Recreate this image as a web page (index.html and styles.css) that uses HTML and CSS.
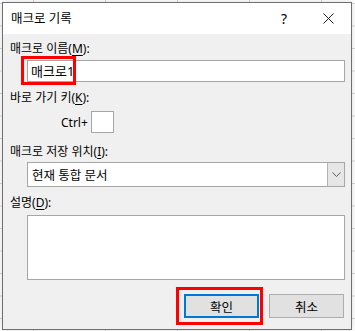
FILE: index.html
```html
<!DOCTYPE html>
<html lang="ko">
<head>
    <meta charset="UTF-8">
    <meta name="viewport" content="width=device-width, initial-scale=1.0">
    <title>매크로 기록</title>
    <link rel="stylesheet" href="styles.css">
</head>
<body>
    <div class="dialog">
        <div class="titlebar">
            <span class="title">매크로 기록</span>
            <span class="help">?</span>
            <svg class="close" width="11" height="11" viewBox="0 0 11 11">
                <path d="M0.5 0.5 L10.5 10.5 M10.5 0.5 L0.5 10.5" stroke="#1a1a1a" stroke-width="1" fill="none"/>
            </svg>
        </div>
        <div class="content">
            <div class="label first">매크로 이름(<u>M</u>):</div>
            <div class="field">
                <div class="textbox">매크로1</div>
                <div class="mark mark-name"></div>
            </div>

            <div class="label">바로 가기 키(<u>K</u>):</div>
            <div class="shortcut">
                <span>Ctrl+</span>
                <div class="keybox"></div>
            </div>

            <div class="label gap-lg">매크로 저장 위치(<u>I</u>):</div>
            <div class="select">
                <span class="select-text">현재 통합 문서</span>
                <div class="drop">
                    <svg width="9" height="5" viewBox="0 0 9 5">
                        <path d="M0.5 0.5 L4.5 4.5 L8.5 0.5" stroke="#5a5a5a" stroke-width="1" fill="none"/>
                    </svg>
                </div>
            </div>

            <div class="label">설명(<u>D</u>):</div>
            <div class="memo"></div>

            <div class="buttons">
                <div class="btn-wrap">
                    <div class="btn default">확인</div>
                    <div class="mark mark-ok"></div>
                </div>
                <div class="btn">취소</div>
            </div>
        </div>
    </div>
</body>
</html>
```

FILE: styles.css
```css
body{
    margin: 0;
    width: 355px;
    height: 331px;
    overflow: hidden;
    background-color: white;
    background-image:
        linear-gradient(to right, #d6d6d6 1px, transparent 1px),
        linear-gradient(to bottom, #d6d6d6 1px, transparent 1px);
    background-size: 72px 22.5px;
    background-position: 33px 3px;
    font-family: "Noto Sans", "Noto Sans CJK KR", sans-serif;
    font-size: 12px;
    color: #000;
}
.dialog{
    box-sizing: border-box;
    width: 350px;
    height: 328px;
    margin: 2px 0 0 2px;
    border: 1px solid #6f6f6f;
    background-color: #f0f0f0;
    box-shadow: 0 0 6px rgba(0,0,0,0.15);
    display: flex;
    flex-direction: column;
}
.titlebar{
    height: 31px;
    background-color: white;
    display: flex;
    align-items: center;
    padding: 0 0 0 8px;
}
.title{
    font-size: 12.5px;
    line-height: 16px;
    flex: 1;
}
.help{
    font-size: 14px;
    line-height: 16px;
    margin-right: 36px;
}
.close{
    margin-right: 17px;
}
.content{
    padding: 0 7px;
    display: flex;
    flex-direction: column;
    align-items: flex-start;
}
.label{
    line-height: 16px;
    margin-top: 8px;
}
.label u{
    text-underline-offset: 2px;
}
.first{
    margin-top: 7px;
}
.gap-lg{
    margin-top: 11px;
}
.field{
    position: relative;
    margin: 3px 0 0 17px;
}
.textbox{
    box-sizing: border-box;
    width: 318px;
    height: 22px;
    background-color: white;
    border: 1px solid #a6a6a6;
    padding: 0 0 0 3px;
    font-size: 13px;
    line-height: 20px;
}
.mark{
    position: absolute;
    box-sizing: border-box;
    border: 3px solid #ff0000;
}
.mark-name{
    left: -6px;
    top: -4px;
    width: 55px;
    height: 29px;
}
.shortcut{
    display: flex;
    align-items: center;
    margin: 5px 0 0 51px;
}
.shortcut span{
    margin-right: 3px;
}
.keybox{
    box-sizing: border-box;
    width: 23px;
    height: 22px;
    background-color: white;
    border: 1px solid #a6a6a6;
}
.select{
    box-sizing: border-box;
    width: 318px;
    height: 25px;
    margin: 2px 0 0 17px;
    background-color: white;
    border: 1px solid #a6a6a6;
    display: flex;
    align-items: center;
}
.select-text{
    flex: 1;
    padding-left: 4px;
    font-size: 12.5px;
}
.drop{
    box-sizing: border-box;
    width: 17px;
    height: 100%;
    background-color: #e6e6e6;
    border-left: 1px solid #b4b4b4;
    display: flex;
    align-items: center;
    justify-content: center;
}
.memo{
    box-sizing: border-box;
    width: 318px;
    height: 65px;
    margin: 4px 0 0 17px;
    background-color: white;
    border: 1px solid #a6a6a6;
}
.buttons{
    width: 317px;
    margin: 14px 0 0 17px;
    display: flex;
    justify-content: flex-end;
    gap: 10px;
}
.btn-wrap{
    position: relative;
}
.btn{
    box-sizing: border-box;
    width: 75px;
    height: 24px;
    background-color: #e1e1e1;
    border: 1px solid #adadad;
    display: flex;
    align-items: center;
    justify-content: center;
    font-size: 12.5px;
}
.default{
    border: 2px solid #0078d7;
}
.mark-ok{
    left: -8px;
    top: -7px;
    width: 87px;
    height: 38px;
}
```
